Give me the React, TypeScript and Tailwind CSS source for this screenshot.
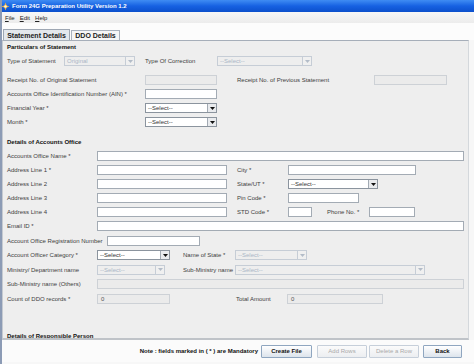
import React from "react";

type Kind = "on" | "off";

function Label({ w, children }: { w: string; children: React.ReactNode }) {
  return <div className={`${w} shrink-0 whitespace-nowrap text-[6px] leading-none text-[#404040]`}>{children}</div>;
}

function Input({ w, kind = "on", value }: { w: string; kind?: Kind; value?: string }) {
  const look = kind === "on" ? "border-[#a3abb4] bg-white" : "border-[#cdd1d6] bg-[#ebebeb] text-[#555]";
  return (
    <div className={`${w} ${look} h-[10px] shrink-0 border flex items-center pl-[3px] text-[6px] leading-none`}>
      {value}
    </div>
  );
}

function Select({ w, kind = "on", text = "--Select--" }: { w: string; kind?: Kind; text?: string }) {
  const on = kind === "on";
  return (
    <div className={`${w} h-[10px] shrink-0 flex border ${on ? "border-[#8b949e] bg-white" : "border-[#c6cdd6] bg-[#eeeeee]"}`}>
      <div className={`flex-1 flex items-center pl-[2px] text-[6px] leading-none ${on ? "text-[#333]" : "text-[#aab6c6]"}`}>{text}</div>
      <div className={`w-[9px] flex items-center justify-center border-l ${on ? "border-[#a2aab3] bg-[#e9ebee]" : "border-[#c6cdd6] bg-[#f0f0f0]"}`}>
        <svg width="5" height="3" viewBox="0 0 5 3">
          <path d="M0 0h5L2.5 3z" fill={on ? "#111" : "#b3bcc8"} />
        </svg>
      </div>
    </div>
  );
}

function Row({ h = "h-[14px]", children }: { h?: string; children: React.ReactNode }) {
  return <div className={`${h} flex items-center`}>{children}</div>;
}

function Head({ mt, children }: { mt: string; children: React.ReactNode }) {
  return <div className={`${mt} h-[10px] flex items-center text-[6px] font-bold leading-none text-[#111] whitespace-nowrap`}>{children}</div>;
}

function Btn({ label, off }: { label: string; off?: boolean }) {
  return (
    <div
      className={`h-[13px] flex items-center justify-center border rounded-[1px] text-[6px] leading-none bg-gradient-to-b ${
        off
          ? "border-[#c6cfda] from-[#fbfbfb] to-[#eceef1] text-[#a9a9a9]"
          : "border-[#8fa6c0] from-white to-[#dde4ec] text-[#111] font-bold"
      } ${label === "Back" ? "w-[39px]" : label === "Create File" ? "w-[51px]" : "w-[50px]"}`}
    >
      {label}
    </div>
  );
}

export default function App() {
  return (
    <div
      className="w-[474px] h-[364px] overflow-hidden flex flex-col bg-[#f7f7f7] border-l-2 border-[#8c9bb5]"
      style={{ fontFamily: "'Liberation Sans', Arial, sans-serif" }}
    >
      {/* title bar */}
      <div className="h-[12px] shrink-0 flex items-center bg-gradient-to-b from-[#3f8cf3] via-[#1661e2] to-[#0c50cc] -ml-[2px]">
        <svg width="9" height="9" viewBox="0 0 9 9" className="ml-[1px]">
          <path d="M4.5 0.5L5.6 3.4L8.5 4.5L5.6 5.6L4.5 8.5L3.4 5.6L0.5 4.5L3.4 3.4z" fill="#f4b53a" />
          <circle cx="4.5" cy="4.5" r="1.3" fill="#fff6d8" />
        </svg>
        <span className="ml-[2px] text-[6px] font-bold text-white leading-none">Form 24G Preparation Utility Version 1.2</span>
      </div>

      {/* menu bar */}
      <div className="h-[11px] shrink-0 flex items-center gap-[5px] pl-[3px] bg-gradient-to-b from-[#f7f7f7] to-[#ececec] text-[6px] leading-none text-[#222]">
        <span><u>F</u>ile</span>
        <span><u>E</u>dit</span>
        <span><u>H</u>elp</span>
      </div>

      {/* tabs */}
      <div className="h-[17px] shrink-0 flex items-end pl-[1px] bg-[#fcfcfc]">
        <div className="w-[67px] h-[11px] flex items-center justify-center border border-b-0 border-[#9ea7b3] bg-[#e3e7ec] text-[7px] font-bold leading-none text-[#222]">
          Statement Details
        </div>
        <div className="ml-[1px] w-[49px] h-[10px] flex items-center justify-center border border-b-0 border-[#aab2bd] bg-[#f6f6f6] text-[7px] font-bold leading-none text-[#222]">
          DDO Details
        </div>
      </div>

      {/* panel */}
      <div className="h-[300px] shrink-0 mr-[5px] border-t border-l border-r border-b-2 border-t-[#a6aeb9] border-l-[#c5cad1] border-r-[#d4d8dc] border-b-[#bfc3c8] bg-[#eeeeee] overflow-hidden pl-[4px]">
        <Head mt="mt-[1px]">Particulars of Statement</Head>
        <div className="mt-[2px]">
          <Row>
            <Label w="w-[57px]">Type of Statement</Label>
            <Select w="w-[71px]" kind="off" text="Original" />
            <div className="ml-[10px]" />
            <Label w="w-[72px]">Type Of Correction</Label>
            <Select w="w-[95px]" kind="off" />
          </Row>
        </div>
        <div className="mt-[5px]">
          <Row>
            <Label w="w-[138px]">Receipt No. of Original Statement</Label>
            <Input w="w-[72px]" kind="off" />
            <div className="ml-[20px]" />
            <Label w="w-[137px]">Receipt No. of Previous Statement</Label>
            <Input w="w-[73px]" kind="off" />
          </Row>
          <Row>
            <Label w="w-[138px]">Accounts Office Identification Number (AIN) *</Label>
            <Input w="w-[72px]" />
          </Row>
          <Row>
            <Label w="w-[138px]">Financial Year *</Label>
            <Select w="w-[72px]" />
          </Row>
          <Row>
            <Label w="w-[138px]">Month *</Label>
            <Select w="w-[72px]" />
          </Row>
        </div>

        <Head mt="mt-[8px]">Details of Accounts Office</Head>
        <div className="mt-[2px]">
          <Row>
            <Label w="w-[90px]">Accounts Office Name *</Label>
            <Input w="w-[367px]" />
          </Row>
          <Row>
            <Label w="w-[90px]">Address Line 1 *</Label>
            <Input w="w-[130px]" />
            <div className="ml-[10px]" />
            <Label w="w-[51px]">City *</Label>
            <Input w="w-[128px]" />
          </Row>
          <Row>
            <Label w="w-[90px]">Address Line 2</Label>
            <Input w="w-[130px]" />
            <div className="ml-[10px]" />
            <Label w="w-[51px]">State/UT *</Label>
            <Select w="w-[90px]" />
          </Row>
          <Row>
            <Label w="w-[90px]">Address Line 3</Label>
            <Input w="w-[130px]" />
            <div className="ml-[10px]" />
            <Label w="w-[51px]">Pin Code *</Label>
            <Input w="w-[71px]" />
          </Row>
          <Row>
            <Label w="w-[90px]">Address Line 4</Label>
            <Input w="w-[130px]" />
            <div className="ml-[10px]" />
            <Label w="w-[51px]">STD Code *</Label>
            <Input w="w-[24px]" />
            <div className="ml-[15px]" />
            <Label w="w-[42px]">Phone No. *</Label>
            <Input w="w-[46px]" />
          </Row>
          <Row>
            <Label w="w-[90px]">Email ID *</Label>
            <Input w="w-[367px]" />
          </Row>
          <Row h="h-[15px]">
            <Label w="w-[100px]">Account Office Registration Number</Label>
            <Input w="w-[93px]" />
          </Row>
          <Row>
            <Label w="w-[90px]">Account Officer Category *</Label>
            <Select w="w-[73px]" />
            <div className="ml-[13px]" />
            <Label w="w-[52px]">Name of State *</Label>
            <Select w="w-[72px]" kind="off" />
          </Row>
          <Row h="h-[15px]">
            <Label w="w-[90px]">Ministry/ Department name</Label>
            <Select w="w-[68px]" kind="off" />
            <div className="ml-[18px]" />
            <Label w="w-[52px]">Sub-Ministry name</Label>
            <Select w="w-[190px]" kind="off" />
          </Row>
          <Row>
            <Label w="w-[90px]">Sub-Ministry name (Others)</Label>
            <Input w="w-[367px]" kind="off" />
          </Row>
          <Row h="h-[15px]">
            <Label w="w-[90px]">Count of DDO records *</Label>
            <Input w="w-[73px]" kind="off" value="0" />
            <div className="ml-[66px]" />
            <Label w="w-[51px]">Total Amount</Label>
            <Input w="w-[96px]" kind="off" value="0" />
          </Row>
        </div>

        <Head mt="mt-[25px]">Details of Responsible Person</Head>
      </div>

      {/* footer */}
      <div className="h-[22px] shrink-0 flex items-center justify-end pr-[12px] bg-[#fbfbfb]">
        <span className="mr-[3px] text-[6px] font-bold leading-none text-[#111] whitespace-nowrap">
          Note : fields marked in ( * ) are Mandatory
        </span>
        <Btn label="Create File" />
        <div className="ml-[5px]" />
        <Btn label="Add Rows" off />
        <div className="ml-[2px]" />
        <Btn label="Delete a Row" off />
        <div className="ml-[4px]" />
        <Btn label="Back" />
      </div>
    </div>
  );
}
